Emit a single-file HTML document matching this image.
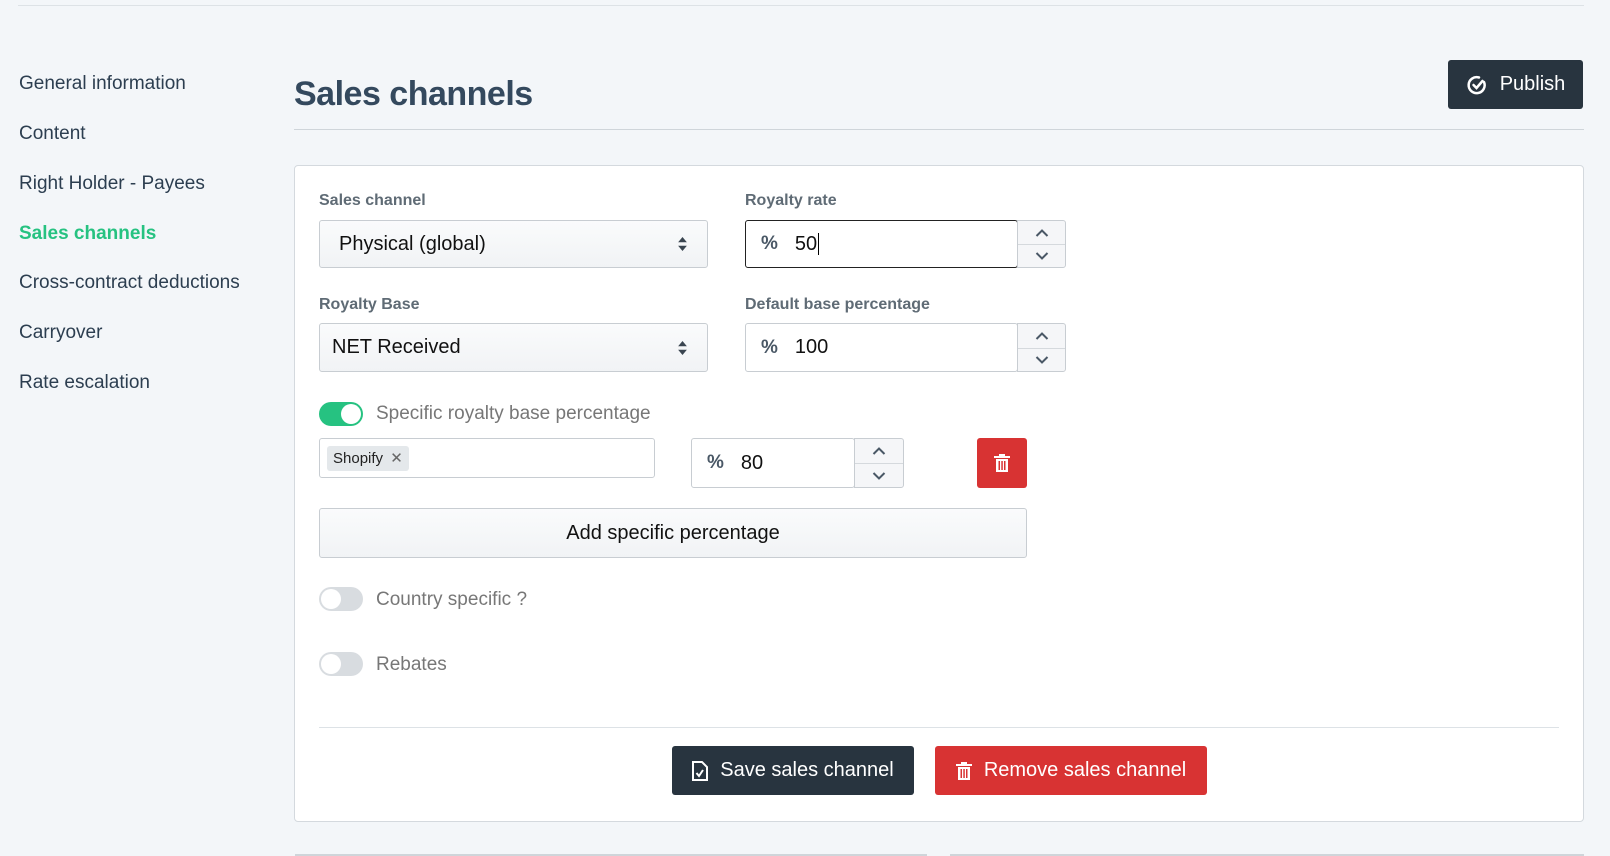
<!DOCTYPE html>
<html><head><meta charset="utf-8"><style>
*{box-sizing:border-box;margin:0;padding:0}
body{width:1610px;height:856px;background:#f3f6f9;font-family:"Liberation Sans",sans-serif;position:relative;overflow:hidden;color:#2c3e50}
.a{position:absolute}
.nav{left:19px;font-size:19px;color:#2c3e50}
.lbl{font-size:16px;font-weight:bold;color:#5f6b75}
.inp{background:#fff;border:1px solid #c8cdd2;border-radius:3px}
.sel{background:linear-gradient(#fafbfc,#f1f3f5);border:1px solid #c8cdd2;border-radius:3px;font-size:20px;color:#111;display:flex;align-items:center}
.spin{background:#f5f6f8;border:1px solid #c8cdd2;border-radius:0 3px 3px 0}
.spin div{height:50%;display:flex;align-items:center;justify-content:center}
.spin div+div{border-top:1px solid #d5d9dd}
.pct{font-size:20px;display:flex;align-items:center;color:#111}
.pct b{color:#4a5866;font-weight:bold;margin-right:17px;font-size:19px}
.tog{width:44px;height:24px;border-radius:12px}
.tog i{position:absolute;top:2px;width:20px;height:20px;border-radius:50%;background:#fff}
.tl{font-size:19px;color:#777}
.btn{border-radius:3px;color:#fff;font-size:20px;display:flex;align-items:center;justify-content:center;gap:12px}
.ud{position:absolute;width:9px;height:14px}
</style></head><body>
<svg width="0" height="0" style="position:absolute"><defs>
<symbol id="up" viewBox="0 0 14 8"><path d="M1.5 7L7 1.5 12.5 7" fill="none" stroke="#4a5866" stroke-width="2"/></symbol>
<symbol id="dn" viewBox="0 0 14 8"><path d="M1.5 1L7 6.5 12.5 1" fill="none" stroke="#4a5866" stroke-width="2"/></symbol>
<symbol id="sa" viewBox="0 0 10 16"><path d="M5 0L10 6H0z M5 16L0 10h10z" fill="#3a4550"/></symbol>
</defs></svg>
<div class="a" style="left:18px;top:5px;width:1566px;height:1px;background:#dde2e6"></div>
<div class="a nav" style="top:73px">General information</div>
<div class="a nav" style="top:123px">Content</div>
<div class="a nav" style="top:173px">Right Holder - Payees</div>
<div class="a nav" style="top:223px;color:#26c281;font-weight:bold">Sales channels</div>
<div class="a nav" style="top:272px">Cross-contract deductions</div>
<div class="a nav" style="top:322px">Carryover</div>
<div class="a nav" style="top:372px">Rate escalation</div>
<div class="a" style="left:294px;top:75px;font-size:34px;font-weight:bold;color:#34495e;letter-spacing:-0.5px">Sales channels</div>
<div class="a btn" style="left:1448px;top:60px;width:135px;height:49px;background:#28343f;font-size:20px">
<svg width="22" height="22" viewBox="0 0 22 22" fill="none" stroke="#fff" stroke-width="2.5" stroke-linecap="round"><path d="M18 8A8 8 0 1 1 13 3.5"/><path d="M7.5 11l3 3 6-7"/></svg>Publish</div>
<div class="a" style="left:294px;top:129px;width:1290px;height:1px;background:#cfd5da"></div>
<div class="a" style="left:294px;top:165px;width:1290px;height:657px;background:#fff;border:1px solid #d4d9de;border-radius:4px"></div>
<div class="a lbl" style="left:319px;top:192px">Sales channel</div>
<div class="a lbl" style="left:745px;top:192px">Royalty rate</div>
<div class="a sel" style="left:319px;top:220px;width:389px;height:48px;padding-left:19px">Physical (global)</div>
<svg class="ud" style="left:678px;top:237px"><use href="#sa"/></svg>
<div class="a inp pct" style="left:745px;top:220px;width:273px;height:48px;border:1px solid #222;padding-left:15px"><b>%</b>50<span style="width:1px;height:22px;background:#000;margin-left:1px"></span></div>
<div class="a spin" style="left:1017px;top:220px;width:49px;height:48px"><div><svg width="14" height="8"><use href="#up"/></svg></div><div><svg width="14" height="8"><use href="#dn"/></svg></div></div>
<div class="a lbl" style="left:319px;top:296px">Royalty Base</div>
<div class="a lbl" style="left:745px;top:296px">Default base percentage</div>
<div class="a sel" style="left:319px;top:323px;width:389px;height:49px;padding-left:12px">NET Received</div>
<svg class="ud" style="left:678px;top:341px"><use href="#sa"/></svg>
<div class="a inp pct" style="left:745px;top:323px;width:273px;height:49px;padding-left:15px"><b>%</b>100</div>
<div class="a spin" style="left:1017px;top:323px;width:49px;height:49px"><div><svg width="14" height="8"><use href="#up"/></svg></div><div><svg width="14" height="8"><use href="#dn"/></svg></div></div>
<div class="a tog" style="left:319px;top:402px;background:#26c281"><i style="left:22px"></i></div>
<div class="a tl" style="left:376px;top:403px">Specific royalty base percentage</div>
<div class="a inp" style="left:319px;top:438px;width:336px;height:40px"><div class="a" style="left:7px;top:7px;height:25px;padding:0 6px;background:#e4e8eb;border-radius:3px;font-size:15px;line-height:25px;color:#222">Shopify <span style="color:#666;margin-left:3px">✕</span></div></div>
<div class="a inp pct" style="left:691px;top:438px;width:164px;height:50px;padding-left:15px"><b>%</b>80</div>
<div class="a spin" style="left:854px;top:438px;width:50px;height:50px"><div><svg width="14" height="8"><use href="#up"/></svg></div><div><svg width="14" height="8"><use href="#dn"/></svg></div></div>
<div class="a btn" style="left:977px;top:438px;width:50px;height:50px;background:#d83333"><svg width="16" height="18" viewBox="0 0 16 18" fill="#fff"><rect x="0" y="2" width="16" height="2"/><rect x="5" y="0" width="6" height="2"/><path d="M2 5h12v13H2z M4.5 7v9h1.5V7z M7.3 7v9h1.5V7z M10 7v9h1.5V7z" fill-rule="evenodd"/></svg></div>
<div class="a sel" style="left:319px;top:508px;width:708px;height:50px;justify-content:center">Add specific percentage</div>
<div class="a tog" style="left:319px;top:587px;background:#d8dce0"><i style="left:2px"></i></div>
<div class="a tl" style="left:376px;top:589px">Country specific ?</div>
<div class="a tog" style="left:319px;top:652px;background:#d8dce0"><i style="left:2px"></i></div>
<div class="a tl" style="left:376px;top:654px">Rebates</div>
<div class="a" style="left:319px;top:727px;width:1240px;height:1px;background:#dde2e6"></div>
<div class="a btn" style="left:672px;top:746px;width:242px;height:49px;background:#28343f"><svg width="16" height="20" viewBox="0 0 16 20" fill="none" stroke="#fff" stroke-width="2"><path d="M1 1h9l5 5v13H1z"/><path d="M4.5 12l2.5 3 4-6"/></svg>Save sales channel</div>
<div class="a btn" style="left:935px;top:746px;width:272px;height:49px;background:#d83333"><svg width="16" height="18" viewBox="0 0 16 18" fill="#fff"><rect x="0" y="2" width="16" height="2"/><rect x="5" y="0" width="6" height="2"/><path d="M2 5h12v13H2z M4.5 7v9h1.5V7z M7.3 7v9h1.5V7z M10 7v9h1.5V7z" fill-rule="evenodd"/></svg>Remove sales channel</div>
<div class="a" style="left:295px;top:854px;width:632px;height:2px;background:#cfd5da"></div>
<div class="a" style="left:950px;top:854px;width:634px;height:2px;background:#cfd5da"></div>
</body></html>
